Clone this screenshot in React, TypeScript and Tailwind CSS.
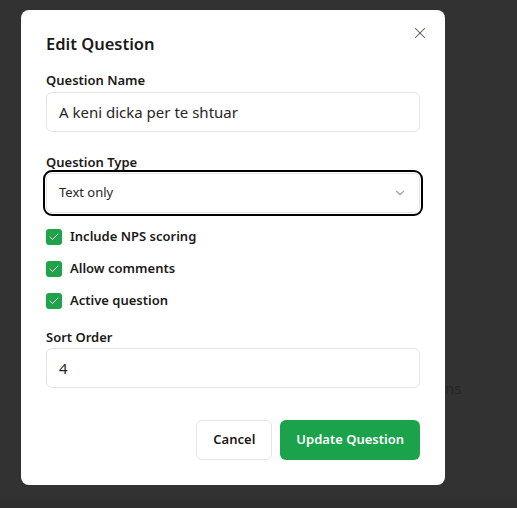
import { Check, ChevronDown, X } from 'lucide-react';

const OPTIONS = [
  { id: 'nps', label: 'Include NPS scoring' },
  { id: 'comments', label: 'Allow comments' },
  { id: 'active', label: 'Active question' },
];

export default function App() {
  return (
    <div
      className="relative w-[517px] h-[508px] bg-[#323232] overflow-hidden"
      style={{ fontFamily: '"Noto Sans", "Open Sans", sans-serif' }}
    >
      {/* page behind the overlay */}
      <div className="absolute left-[445px] top-[377px] text-[15px] text-[#262626]">ns</div>
      <div className="absolute left-0 right-0 bottom-0 h-[8px] bg-[#2f2f2f]" />

      {/* Dialog */}
      <div className="absolute left-[21px] top-[10px] w-[424px] bg-white rounded-lg px-[25px] pt-[23px] pb-[25px]">
        <button className="absolute right-[16px] top-[14px] text-stone-600">
          <X size={18} strokeWidth={1.4} />
        </button>

        <h2 className="text-[16.5px] font-semibold text-stone-900 leading-[22px]">Edit Question</h2>

        <div className="mt-[17px]">
          <label className="block text-[13px] font-semibold text-stone-900 leading-[16px]">Question Name</label>
          <input
            type="text"
            defaultValue="A keni dicka per te shtuar"
            className="mt-[4px] w-full h-[40px] border border-stone-200 rounded-md px-[12px] text-[15px] text-stone-800 outline-none"
          />
        </div>

        <div className="mt-[22px]">
          <label className="block text-[13px] font-semibold text-stone-900 leading-[16px]">Question Type</label>
          <div className="mt-[3px] h-[40px] border border-stone-200 rounded-md px-[12px] flex items-center justify-between outline-2 outline-offset-1 outline-black">
            <span className="text-[13px] text-stone-800">Text only</span>
            <ChevronDown size={14} className="text-stone-400" />
          </div>
        </div>

        <div className="mt-[14px] flex flex-col gap-[12px]">
          {OPTIONS.map((o) => (
            <label key={o.id} className="flex items-center gap-[8px] h-[20px]">
              <span className="w-[16px] h-[16px] rounded-[3px] bg-[#1ea34b] flex items-center justify-center">
                <Check size={12} strokeWidth={2} className="text-white" />
              </span>
              <span className="text-[13px] font-semibold text-stone-900">{o.label}</span>
            </label>
          ))}
        </div>

        <div className="mt-[18px]">
          <label className="block text-[13px] font-semibold text-stone-900 leading-[16px]">Sort Order</label>
          <input
            type="text"
            defaultValue="4"
            className="mt-[3px] w-full h-[40px] border border-stone-200 rounded-md px-[12px] text-[15px] text-stone-800 outline-none"
          />
        </div>

        <div className="mt-[32px] flex justify-end gap-[8px]">
          <button className="h-[40px] px-[16px] border border-stone-200 rounded-md text-[13px] font-semibold text-stone-900 bg-white">
            Cancel
          </button>
          <button className="h-[40px] px-[16px] rounded-md text-[13px] font-semibold text-white bg-[#1aa34a]">
            Update Question
          </button>
        </div>
      </div>
    </div>
  );
}
